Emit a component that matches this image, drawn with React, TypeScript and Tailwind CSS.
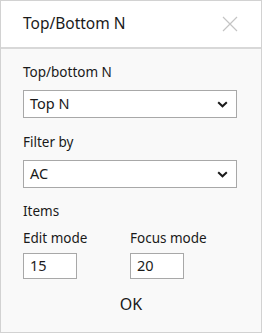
import React from "react";

function Chevron() {
  return (
    <svg width="11" height="7" viewBox="0 0 11 7" className="shrink-0">
      <path d="M1.2 1.2 L5.5 5.3 L9.8 1.2" fill="none" stroke="#1a1a1a" strokeWidth="2" />
    </svg>
  );
}

function Select({ value }: { value: string }) {
  return (
    <div className="flex h-[28px] w-[214px] items-center justify-between border border-[#a8a8a8] bg-white pl-[6px] pr-[8px] text-[14.5px] text-[#1a1a1a]">
      <span>{value}</span>
      <Chevron />
    </div>
  );
}

export default function App() {
  return (
    <div
      className="flex h-[333px] w-[262px] flex-col border border-[#d2d2d2] bg-[#f9f9f9]"
      style={{ fontFamily: '"Noto Sans", "Open Sans", sans-serif' }}
    >
      <div className="flex h-[48px] shrink-0 items-center justify-between border-b-2 border-[#d8d8d8] bg-white pl-[22px] pr-[23px]">
        <span className="text-[15.5px] text-[#1a1a1a]">Top/Bottom N</span>
        <svg width="16" height="16" viewBox="0 0 16 16">
          <path d="M1 1 L15 15 M15 1 L1 15" stroke="#c4c4c4" strokeWidth="1.2" fill="none" />
        </svg>
      </div>
      <div className="flex flex-col px-[22px] pt-[14px] text-[13.5px] text-[#1a1a1a]">
        <div className="leading-[18px]">Top/bottom N</div>
        <div className="mt-[9px]">
          <Select value="Top N" />
        </div>
        <div className="mt-[15px] leading-[18px]">Filter by</div>
        <div className="mt-[9px]">
          <Select value="AC" />
        </div>
        <div className="mt-[14px] leading-[18px]">Items</div>
        <div className="mt-[9px] flex">
          <div className="flex w-[107px] flex-col">
            <div className="leading-[18px]">Edit mode</div>
            <div className="mt-[6px] flex h-[26px] w-[54px] items-center border border-[#a8a8a8] bg-white pl-[6px] text-[14.5px]">15</div>
          </div>
          <div className="flex flex-col">
            <div className="leading-[18px]">Focus mode</div>
            <div className="mt-[6px] flex h-[26px] w-[54px] items-center border border-[#a8a8a8] bg-white pl-[6px] text-[14.5px]">20</div>
          </div>
        </div>
        <div className="mt-[15px] text-center text-[16px] leading-[20px]">OK</div>
      </div>
    </div>
  );
}
